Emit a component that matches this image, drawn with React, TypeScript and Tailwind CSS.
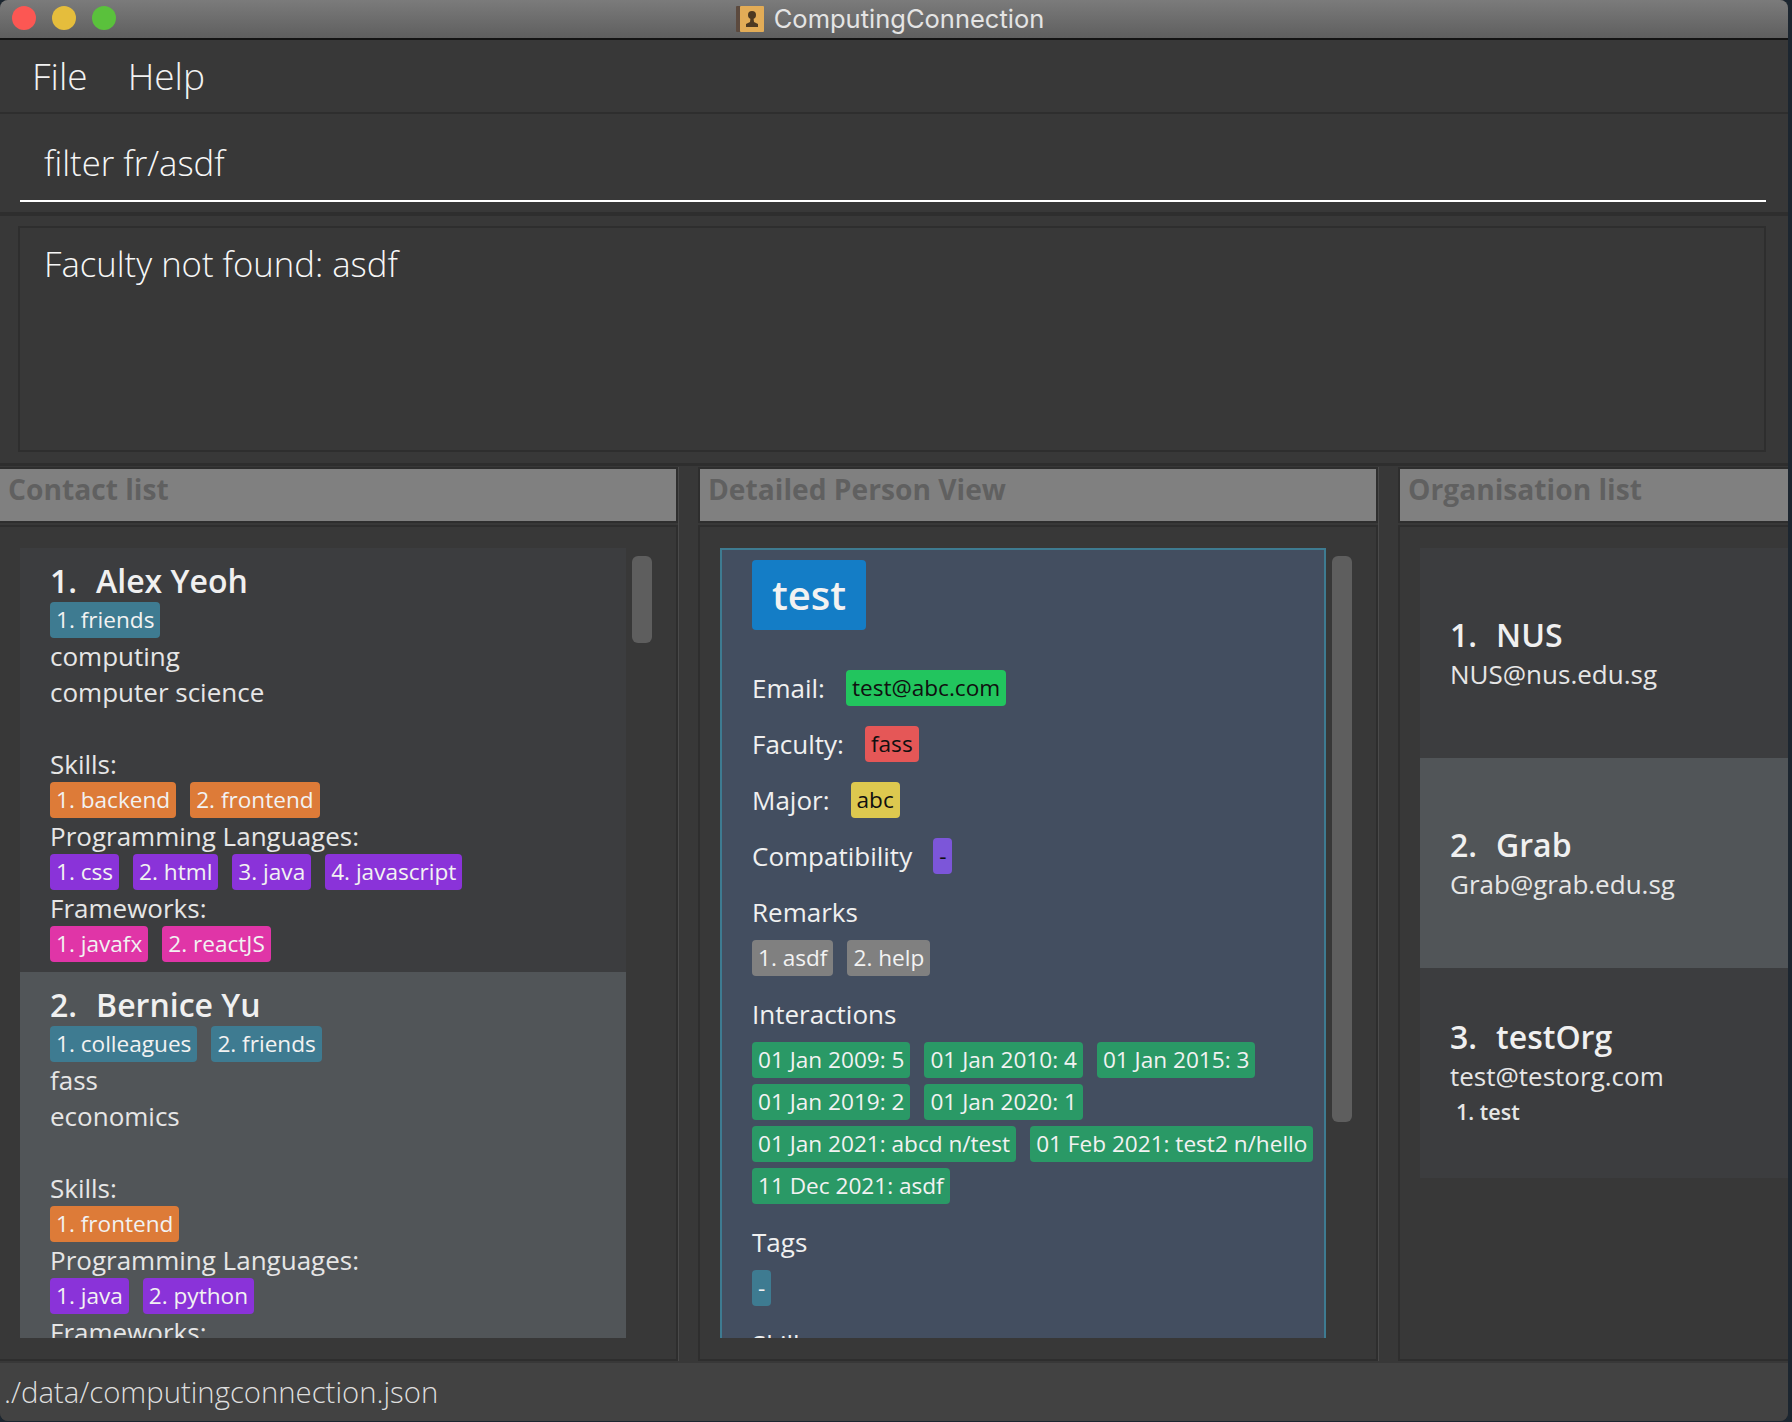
import type { ReactNode } from 'react';

const TAG = 'bg-[#3e7b91] text-[#f2f2f2]';
const SKILL = 'bg-[#dd7b38] text-[#f2f2f2]';
const LANG = 'bg-[#8a33d9] text-[#f2f2f2]';
const FRAMEWORK = 'bg-[#e035a7] text-[#f2f2f2]';
const GREY = 'bg-[#808080] text-[#f2f2f2]';
const INTERACTION = 'bg-[#2a9966] text-[#f2f2f2]';

function Chip({ color, children }: { color: string; children: ReactNode }) {
  return (
    <span className={`h-9 px-[6px] rounded-[4px] text-[22.6px] leading-9 whitespace-nowrap ${color}`}>
      {children}
    </span>
  );
}

function ChipRow({ color, items }: { color: string; items: string[] }) {
  return (
    <div className="flex gap-[14px] h-9">
      {items.map((item) => (
        <Chip key={item} color={color}>{item}</Chip>
      ))}
    </div>
  );
}

function TextRow({ children }: { children?: ReactNode }) {
  return <div className="h-9 text-[26px] leading-9 text-[#e6e6e6]">{children}</div>;
}

function PanelHeader({ title, className }: { title: string; className: string }) {
  return (
    <div className={`h-[56px] border-2 border-[#2e2e2e] bg-[#808080] pl-[8px] text-[28.2px] leading-[40px] font-bold text-[#606060] ${className}`}>
      {title}
    </div>
  );
}

function Field({ label, value, color }: { label: string; value: string; color: string }) {
  return (
    <div className="flex items-center h-9 mb-5 gap-[21px]">
      <span className="text-[26px] text-[#f0f0f0]">{label}</span>
      <Chip color={color}>{value}</Chip>
    </div>
  );
}

function Contact({ idx, name, selected, tags, faculty, major, skills, langs, frameworks }: {
  idx: number;
  name: string;
  selected?: boolean;
  tags: string[];
  faculty: string;
  major: string;
  skills: string[];
  langs: string[];
  frameworks: string[];
}) {
  return (
    <div className={`pl-[30px] pt-[12px] pb-[10px] ${selected ? 'bg-[#515558]' : 'bg-[#3c3d3f]'}`}>
      <div className="h-[42px] text-[32px] leading-[42px] font-semibold text-[#f0f0f0]">
        <span className="mr-[19px]">{idx}.</span>{name}
      </div>
      <ChipRow color={TAG} items={tags} />
      <TextRow>{faculty}</TextRow>
      <TextRow>{major}</TextRow>
      <div className="h-9" />
      <TextRow>Skills:</TextRow>
      <ChipRow color={SKILL} items={skills} />
      <TextRow>Programming Languages:</TextRow>
      <ChipRow color={LANG} items={langs} />
      <TextRow>Frameworks:</TextRow>
      <ChipRow color={FRAMEWORK} items={frameworks} />
    </div>
  );
}

function Org({ idx, name, email, selected, extra }: { idx: number; name: string; email: string; selected?: boolean; extra?: string }) {
  return (
    <div className={`h-[210px] pl-[30px] flex flex-col justify-center ${selected ? 'bg-[#515558]' : 'bg-[#3c3d3f]'}`}>
      <div className="h-[42px] text-[32px] leading-[42px] font-semibold text-[#f0f0f0]">
        <span className="mr-[19px]">{idx}.</span>{name}
      </div>
      <div className="h-9 text-[26px] leading-9 text-[#e6e6e6]">{email}</div>
      {extra && <div className="h-9 pl-[6px] text-[21.5px] leading-9 font-semibold text-[#e6e6e6]">{extra}</div>}
    </div>
  );
}

function Scrollbar({ height }: { height: string }) {
  return <div className={`w-5 rounded-md bg-[#5e5e5e] shrink-0 mt-2 ${height}`} />;
}

export default function App() {
  return (
    <div className="w-[1792px] h-[1422px] bg-[#1c2630] overflow-hidden font-['Open_Sans',sans-serif]">
      <div className="w-[1788px] h-[1421px] flex flex-col rounded-b-lg rounded-t-lg overflow-hidden bg-[#383838]">
        {/* Title bar */}
        <div className="h-[40px] shrink-0 pr-2 flex items-center justify-center relative border-b-2 border-[#141414] bg-gradient-to-b from-[#7b7b7b] to-[#5f5f5f]">
          <div className="absolute left-[12px] top-[6px] flex gap-4">
            <span className="w-6 h-6 rounded-full bg-[#fc5753]" />
            <span className="w-6 h-6 rounded-full bg-[#e5bd3c]" />
            <span className="w-6 h-6 rounded-full bg-[#5ac13c]" />
          </div>
          <svg width="28" height="26" viewBox="0 0 28 26" className="mr-[10px]">
            <rect x="0" y="0" width="5" height="26" rx="1" fill="#5c4a3e" />
            <rect x="4" y="0" width="24" height="26" rx="1" fill="#e2ac57" />
            <circle cx="16" cy="9" r="4" fill="#4c3922" />
            <path d="M14.5 12h3l.5 4 4 2v3H10v-3l4-2z" fill="#4c3922" />
          </svg>
          <span className="text-[25.5px] font-['Inter',sans-serif] text-[#e4e4e4]">ComputingConnection</span>
        </div>

        {/* Menu bar */}
        <div className="h-[74px] shrink-0 flex items-center gap-10 pl-[32px] border-b-2 border-[#2e2e2e] text-[37px] font-light text-[#f2f2f2]">
          <span>File</span>
          <span>Help</span>
        </div>

        {/* Command box */}
        <div className="h-[102px] shrink-0 px-5 border-b-4 border-[#2e2e2e]">
          <div className="h-[88px] pl-[24px] pt-3 flex items-center border-b-2 border-white text-[34.7px] font-light text-[#f7f7f7] mr-[2px]">
            filter fr/asdf
          </div>
        </div>

        {/* Result display */}
        <div className="h-[250px] shrink-0 pt-[10px] pl-[18px] pr-[22px] border-b-[3px] border-[#2e2e2e]">
          <div className="h-[226px] border-2 border-[#2e2e2e] pl-[24px] pt-[10px] text-[34.7px] font-light text-[#f7f7f7]">
            Faculty not found: asdf
          </div>
        </div>

        {/* Panels */}
        <div className="flex-1 min-h-0 grid grid-cols-[679px_681px_390px] gap-x-[19px] pt-[1px]">
          <div className="flex flex-col min-h-0 border-r border-[#4a4a4a]">
            <PanelHeader title="Contact list" className="border-l-0" />
            <div className="flex-1 min-h-0 mt-[2px] border-2 border-l-0 border-[#2e2e2e] flex pl-5 pt-[21px] pb-[21px] gap-[6px]">
              <div className="w-[606px] overflow-hidden">
                <Contact idx={1} name="Alex Yeoh" tags={['1. friends']} faculty="computing" major="computer science"
                  skills={['1. backend', '2. frontend']}
                  langs={['1. css', '2. html', '3. java', '4. javascript']}
                  frameworks={['1. javafx', '2. reactJS']} />
                <Contact idx={2} name="Bernice Yu" selected tags={['1. colleagues', '2. friends']} faculty="fass" major="economics"
                  skills={['1. frontend']}
                  langs={['1. java', '2. python']}
                  frameworks={['1. javafx']} />
              </div>
              <Scrollbar height="h-[87px]" />
            </div>
          </div>

          <div className="flex flex-col min-h-0 border-r border-[#4a4a4a]">
            <PanelHeader title="Detailed Person View" className="" />
            <div className="flex-1 min-h-0 mt-[2px] border-2 border-[#2e2e2e] flex pl-5 pt-[21px] pb-[21px] gap-[6px]">
              <div className="w-[606px] overflow-hidden">
                <div className="h-[900px] bg-[#434e60] border-2 border-[#3e7b91] pl-[30px] pt-[10px]">
                  <div className="w-[114px] h-[70px] rounded-[4px] bg-[#147dc6] text-[40px] leading-[70px] font-semibold text-[#f2f2f2] text-center mb-[40px]">test</div>
                  <Field label="Email:" value="test@abc.com" color="bg-[#22c55e] text-[#101010]" />
                  <Field label="Faculty:" value="fass" color="bg-[#e55757] text-[#101010]" />
                  <Field label="Major:" value="abc" color="bg-[#ddc84f] text-[#101010]" />
                  <Field label="Compatibility" value="-" color="bg-[#7c56d9] text-[#101010]" />
                  <div className="h-9 text-[26px] leading-9 text-[#f0f0f0] mb-[10px]">Remarks</div>
                  <div className="mb-5"><ChipRow color={GREY} items={['1. asdf', '2. help']} /></div>
                  <div className="h-9 text-[26px] leading-9 text-[#f0f0f0] mb-[10px]">Interactions</div>
                  <div className="flex flex-wrap gap-x-[14px] gap-y-[6px] mb-5 w-[566px]">
                    {['01 Jan 2009: 5', '01 Jan 2010: 4', '01 Jan 2015: 3', '01 Jan 2019: 2', '01 Jan 2020: 1', '01 Jan 2021: abcd n/test', '01 Feb 2021: test2 n/hello', '11 Dec 2021: asdf'].map((item) => (
                      <Chip key={item} color={INTERACTION}>{item}</Chip>
                    ))}
                  </div>
                  <div className="h-9 text-[26px] leading-9 text-[#f0f0f0] mb-[10px]">Tags</div>
                  <div className="mb-5"><ChipRow color={TAG} items={['-']} /></div>
                  <div className="h-9 text-[26px] leading-9 text-[#f0f0f0]">Skills</div>
                </div>
              </div>
              <Scrollbar height="h-[566px]" />
            </div>
          </div>

          <div className="flex flex-col min-h-0">
            <PanelHeader title="Organisation list" className="border-r-0" />
            <div className="flex-1 min-h-0 mt-[2px] border-2 border-r-0 border-[#2e2e2e] pl-5 pt-[21px] pb-[21px]">
              <Org idx={1} name="NUS" email="NUS@nus.edu.sg" />
              <Org idx={2} name="Grab" email="Grab@grab.edu.sg" selected />
              <Org idx={3} name="testOrg" email="test@testorg.com" extra="1. test" />
            </div>
          </div>
        </div>

        {/* Status bar */}
        <div className="h-[58px] shrink-0 mt-[2px] bg-[#424242] pl-[4px] text-[29.3px] leading-[58px] font-light text-[#dedede]">
          ./data/computingconnection.json
        </div>
      </div>
    </div>
  );
}
